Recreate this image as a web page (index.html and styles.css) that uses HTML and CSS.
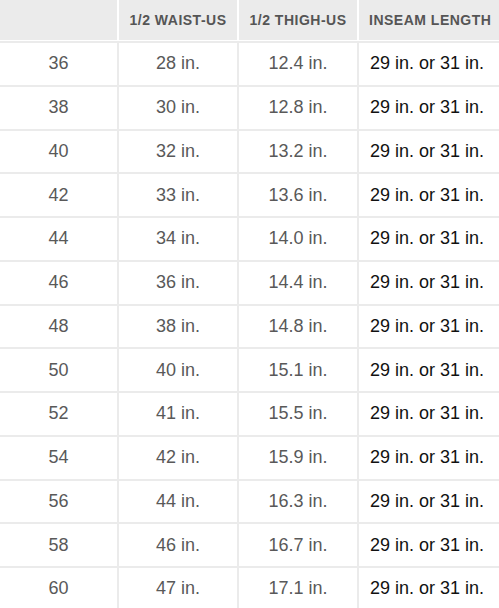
FILE: index.html
```html
<!DOCTYPE html>
<html>
<head>
<meta charset="utf-8">
<link rel="stylesheet" href="styles.css">
</head>
<body>
<table class="size-table">
  <colgroup>
    <col class="c1"><col class="c2"><col class="c3"><col class="c4">
  </colgroup>
  <thead>
    <tr>
      <th></th>
      <th>1/2 WAIST-US</th>
      <th>1/2 THIGH-US</th>
      <th class="left">INSEAM LENGTH</th>
    </tr>
  </thead>
  <tbody>
    <tr><td>36</td><td>28 in.</td><td>12.4 in.</td><td class="left dark">29 in. or 31 in.</td></tr>
    <tr><td>38</td><td>30 in.</td><td>12.8 in.</td><td class="left dark">29 in. or 31 in.</td></tr>
    <tr><td>40</td><td>32 in.</td><td>13.2 in.</td><td class="left dark">29 in. or 31 in.</td></tr>
    <tr><td>42</td><td>33 in.</td><td>13.6 in.</td><td class="left dark">29 in. or 31 in.</td></tr>
    <tr><td>44</td><td>34 in.</td><td>14.0 in.</td><td class="left dark">29 in. or 31 in.</td></tr>
    <tr><td>46</td><td>36 in.</td><td>14.4 in.</td><td class="left dark">29 in. or 31 in.</td></tr>
    <tr><td>48</td><td>38 in.</td><td>14.8 in.</td><td class="left dark">29 in. or 31 in.</td></tr>
    <tr><td>50</td><td>40 in.</td><td>15.1 in.</td><td class="left dark">29 in. or 31 in.</td></tr>
    <tr><td>52</td><td>41 in.</td><td>15.5 in.</td><td class="left dark">29 in. or 31 in.</td></tr>
    <tr><td>54</td><td>42 in.</td><td>15.9 in.</td><td class="left dark">29 in. or 31 in.</td></tr>
    <tr><td>56</td><td>44 in.</td><td>16.3 in.</td><td class="left dark">29 in. or 31 in.</td></tr>
    <tr><td>58</td><td>46 in.</td><td>16.7 in.</td><td class="left dark">29 in. or 31 in.</td></tr>
    <tr><td>60</td><td>47 in.</td><td>17.1 in.</td><td class="left dark">29 in. or 31 in.</td></tr>
  </tbody>
</table>
</body>
</html>
```

FILE: styles.css
```css
html, body {
  margin: 0;
  padding: 0;
  background: #ffffff;
}
body {
  font-family: "Liberation Sans", Arial, sans-serif;
  overflow: hidden;
}
.size-table {
  width: 499px;
  border-collapse: separate;
  border-spacing: 0;
  table-layout: fixed;
}
.c1 { width: 119px; }
.c2 { width: 120px; }
.c3 { width: 120px; }
.c4 { width: 140px; }

.size-table th {
  height: 40px;
  padding: 0;
  background: #ebebeb;
  border-right: 2px solid #ffffff;
  border-bottom: 1px solid #ffffff;
  font-size: 14px;
  font-weight: bold;
  letter-spacing: 0.5px;
  color: #555555;
  text-align: center;
  vertical-align: middle;
}
.size-table th:last-child {
  border-right: none;
}
.size-table td {
  height: 41.75px;
  padding: 0;
  border-top: 2px solid #ebebeb;
  border-right: 2px solid #ebebeb;
  font-size: 18px;
  color: #595959;
  text-align: center;
  vertical-align: middle;
}
.size-table td:last-child {
  border-right: none;
}
.size-table .left {
  text-align: left;
  padding-left: 10px;
}
.size-table td.left {
  padding-left: 11px;
}
.size-table .dark {
  color: #111111;
}
```
